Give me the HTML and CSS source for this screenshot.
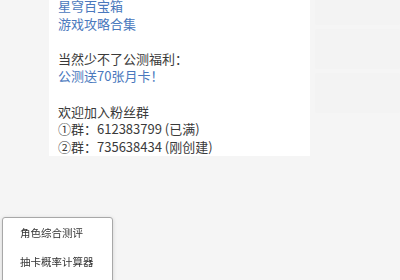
FILE: index.html
```html
<!DOCTYPE html>
<html lang="zh-CN">
<head>
    <meta charset="UTF-8">
    <title>星穹百宝箱</title>
    <link rel="stylesheet" href="styles.css">
</head>
<body>
    <div class="page">
        <div class="card">
            <a class="link" href="#">星穹百宝箱</a>
            <a class="link" href="#">游戏攻略合集</a>
            <div class="gap"></div>
            <div class="line">当然少不了公测福利：</div>
            <a class="link" href="#">公测送70张月卡！</a>
            <div class="gap"></div>
            <div class="line">欢迎加入粉丝群</div>
            <div class="line">①群：612383799 (已满)</div>
            <div class="line">②群：735638434 (刚创建)</div>
        </div>
        <div class="side">
            <div class="side-box short"></div>
            <div class="side-box"></div>
            <div class="side-box"></div>
        </div>
    </div>
    <div class="menu">
        <div class="menu-item">角色综合测评</div>
        <div class="menu-item">抽卡概率计算器</div>
    </div>
</body>
</html>
```

FILE: styles.css
```css
body {
    margin: 0;
    background: #f5f5f5;
    color: #3a3a3a;
    font-family: "Microsoft YaHei", "Noto Sans CJK SC", sans-serif;
    font-size: 13px;
    overflow: hidden;
}
.page {
    display: flex;
    align-items: flex-start;
    margin-top: -3px;
    padding-left: 49px;
}
.card {
    background: #fff;
    width: 248px;
    padding: 0 8px 1px 9px;
    line-height: 17.6px;
}
.link, .line {
    display: block;
    white-space: nowrap;
}
.link {
    color: #4a78bd;
    text-decoration: none;
}
.gap {
    height: 17.6px;
}
.side {
    margin-left: 5px;
    width: 86px;
    display: flex;
    flex-direction: column;
    gap: 4px;
}
.side-box {
    background: #f3f3f3;
    height: 40px;
    border-radius: 2px;
}
.side-box.short {
    height: 28px;
}
.menu {
    position: fixed;
    left: 2px;
    top: 217px;
    width: 109px;
    height: 80px;
    background: #fff;
    border: 1px solid #a8a8a8;
    border-radius: 3px;
    box-shadow: 0 1px 4px rgba(0,0,0,0.15);
}
.menu-item {
    height: 29px;
    line-height: 29px;
    padding-left: 17px;
    color: #333;
    font-size: 10.5px;
    white-space: nowrap;
}
```
